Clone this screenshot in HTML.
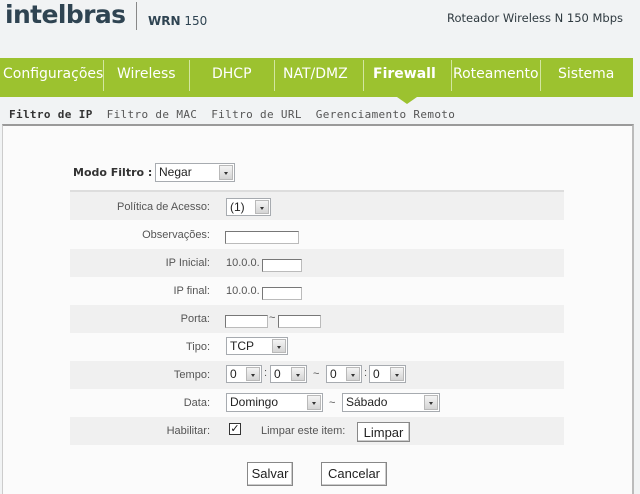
<!DOCTYPE html>
<html><head><meta charset="utf-8"><style>
*{margin:0;padding:0;box-sizing:border-box}
body{width:640px;height:487px;overflow:hidden;background:#f1f3f4;font-family:"DejaVu Sans","Liberation Sans",sans-serif;position:relative;color:#444}
.a{position:absolute}
.nav{top:58px;left:0;width:633px;height:39px;background:#9cc22f}
.nav span{position:absolute;top:0;height:38px;line-height:32px;color:#fff;font-size:14px;white-space:nowrap}
.sep{position:absolute;top:2px;width:1px;height:31px;background:#d3e6a0}
.box{top:124px;left:2px;width:632px;height:370px;background:#fbfbfb;border-top:2px solid #9a9a9a;border-left:1px solid #ccc;border-right:2px solid #bbb}
.row{left:70px;width:494px;height:28px}
.g{background:#f0f0f0}
.lbl{font-size:11px;color:#555;text-align:right;width:140px;left:70px;font-family:"Liberation Sans",sans-serif}
.sel{background:#fff;border:1px solid #a7abb0;font:12px "Liberation Sans",sans-serif;color:#222;padding-left:3px;line-height:16px}
.sel i{position:absolute;right:1px;top:1px;bottom:1px;width:14px;background:linear-gradient(#f4f4f4,#d4d4d4);border:1px solid #b9b9b9}
.sel i:after{content:"";position:absolute;left:4px;top:6px;border:2.5px solid transparent;border-top:3px solid #333}
.inp{background:#fff;border:1px solid #777;border-right-color:#bbb;border-bottom-color:#bbb;height:13px}
.t{font:11px "Liberation Sans",sans-serif;color:#555}
.btn{background:#fff;border:1px solid #888;font:13px "Liberation Sans",sans-serif;color:#222;text-align:center;line-height:20px;box-shadow:inset -1px -1px 0 #ccc}
</style></head><body>
<div class="a" style="left:5px;top:0px;font:bold 25px 'DejaVu Sans',sans-serif;color:#2f4452;letter-spacing:-0.6px">intelbras</div>
<div class="a" style="left:136px;top:2px;width:1px;height:28px;background:#888"></div>
<div class="a" style="left:148px;top:14px;font:12px 'DejaVu Sans',sans-serif;color:#2f4452"><b>WRN</b> 150</div>
<div class="a" style="left:447px;top:11px;font:11.5px 'DejaVu Sans',sans-serif;color:#2f3a40;white-space:nowrap">Roteador Wireless N 150 Mbps</div>
<div class="a nav">
<span style="left:3px">Configurações</span><div class="sep" style="left:103px"></div>
<span style="left:117px">Wireless</span><div class="sep" style="left:189px"></div>
<span style="left:212px">DHCP</span><div class="sep" style="left:274px"></div>
<span style="left:283px">NAT/DMZ</span><div class="sep" style="left:363px"></div>
<span style="left:373px;font-weight:bold">Firewall</span><div class="sep" style="left:451px"></div>
<span style="left:453px">Roteamento</span><div class="sep" style="left:540px"></div>
<span style="left:558px">Sistema</span>
</div>
<div class="a" style="left:397px;top:97px;border:10px solid transparent;border-top:7px solid #9cc22f;border-bottom:0"></div>
<div class="a" style="left:9px;top:108px;font:11px 'DejaVu Sans Mono','Liberation Mono',monospace;color:#555;white-space:nowrap;letter-spacing:0.35px"><b style="color:#333">Filtro de IP</b>&nbsp;&nbsp;Filtro de MAC&nbsp;&nbsp;Filtro de URL&nbsp;&nbsp;Gerenciamento Remoto</div>
<div class="a box"></div>
<div class="a" style="left:73px;top:166px;font:bold 11px 'DejaVu Sans',sans-serif;color:#333">Modo Filtro :</div>
<div class="a sel" style="left:155px;top:163px;width:80px;height:19px">Negar<i></i></div>
<div class="a" style="left:70px;top:190px;width:494px;height:2px;background:#ddd"></div>
<div class="a row g" style="top:192px"></div>
<div class="a row g" style="top:249px"></div>
<div class="a row g" style="top:305px"></div>
<div class="a row g" style="top:361px"></div>
<div class="a row g" style="top:417px"></div>
<div class="a lbl" style="top:201px">Política de Acesso:</div>
<div class="a sel" style="left:226px;top:198px;width:45px;height:18px">(1)<i></i></div>
<div class="a lbl" style="top:229px">Observações:</div>
<div class="a inp" style="left:225px;top:231px;width:74px"></div>
<div class="a lbl" style="top:257px">IP Inicial:</div>
<div class="a t" style="left:226px;top:257px">10.0.0.</div>
<div class="a inp" style="left:262px;top:259px;width:40px"></div>
<div class="a lbl" style="top:285px">IP final:</div>
<div class="a t" style="left:226px;top:285px">10.0.0.</div>
<div class="a inp" style="left:262px;top:287px;width:40px"></div>
<div class="a lbl" style="top:313px">Porta:</div>
<div class="a inp" style="left:225px;top:315px;width:43px"></div>
<div class="a t" style="left:269px;top:312px">~</div>
<div class="a inp" style="left:278px;top:315px;width:43px"></div>
<div class="a lbl" style="top:341px">Tipo:</div>
<div class="a sel" style="left:226px;top:337px;width:62px;height:18px">TCP<i></i></div>
<div class="a lbl" style="top:369px">Tempo:</div>
<div class="a sel" style="left:226px;top:365px;width:36px;height:18px">0<i></i></div>
<div class="a t" style="left:264px;top:367px">:</div>
<div class="a sel" style="left:270px;top:365px;width:37px;height:18px">0<i></i></div>
<div class="a t" style="left:313px;top:368px">~</div>
<div class="a sel" style="left:326px;top:365px;width:36px;height:18px">0<i></i></div>
<div class="a t" style="left:364px;top:367px">:</div>
<div class="a sel" style="left:369px;top:365px;width:37px;height:18px">0<i></i></div>
<div class="a lbl" style="top:397px">Data:</div>
<div class="a sel" style="left:226px;top:393px;width:97px;height:19px">Domingo<i></i></div>
<div class="a t" style="left:329px;top:397px">~</div>
<div class="a sel" style="left:342px;top:393px;width:98px;height:19px">Sábado<i></i></div>
<div class="a lbl" style="top:425px">Habilitar:</div>
<div class="a" style="left:229px;top:423px;width:12px;height:12px;border:1px solid #333;background:#fff;font:11px sans-serif;line-height:10px;text-align:center;color:#111">✓</div>
<div class="a t" style="left:261px;top:425px">Limpar este item:</div>
<div class="a btn" style="left:357px;top:422px;width:53px;height:20px">Limpar</div>
<div class="a btn" style="left:247px;top:462px;width:46px;height:24px;line-height:22px">Salvar</div>
<div class="a btn" style="left:321px;top:462px;width:66px;height:24px;line-height:22px">Cancelar</div>
</body></html>
